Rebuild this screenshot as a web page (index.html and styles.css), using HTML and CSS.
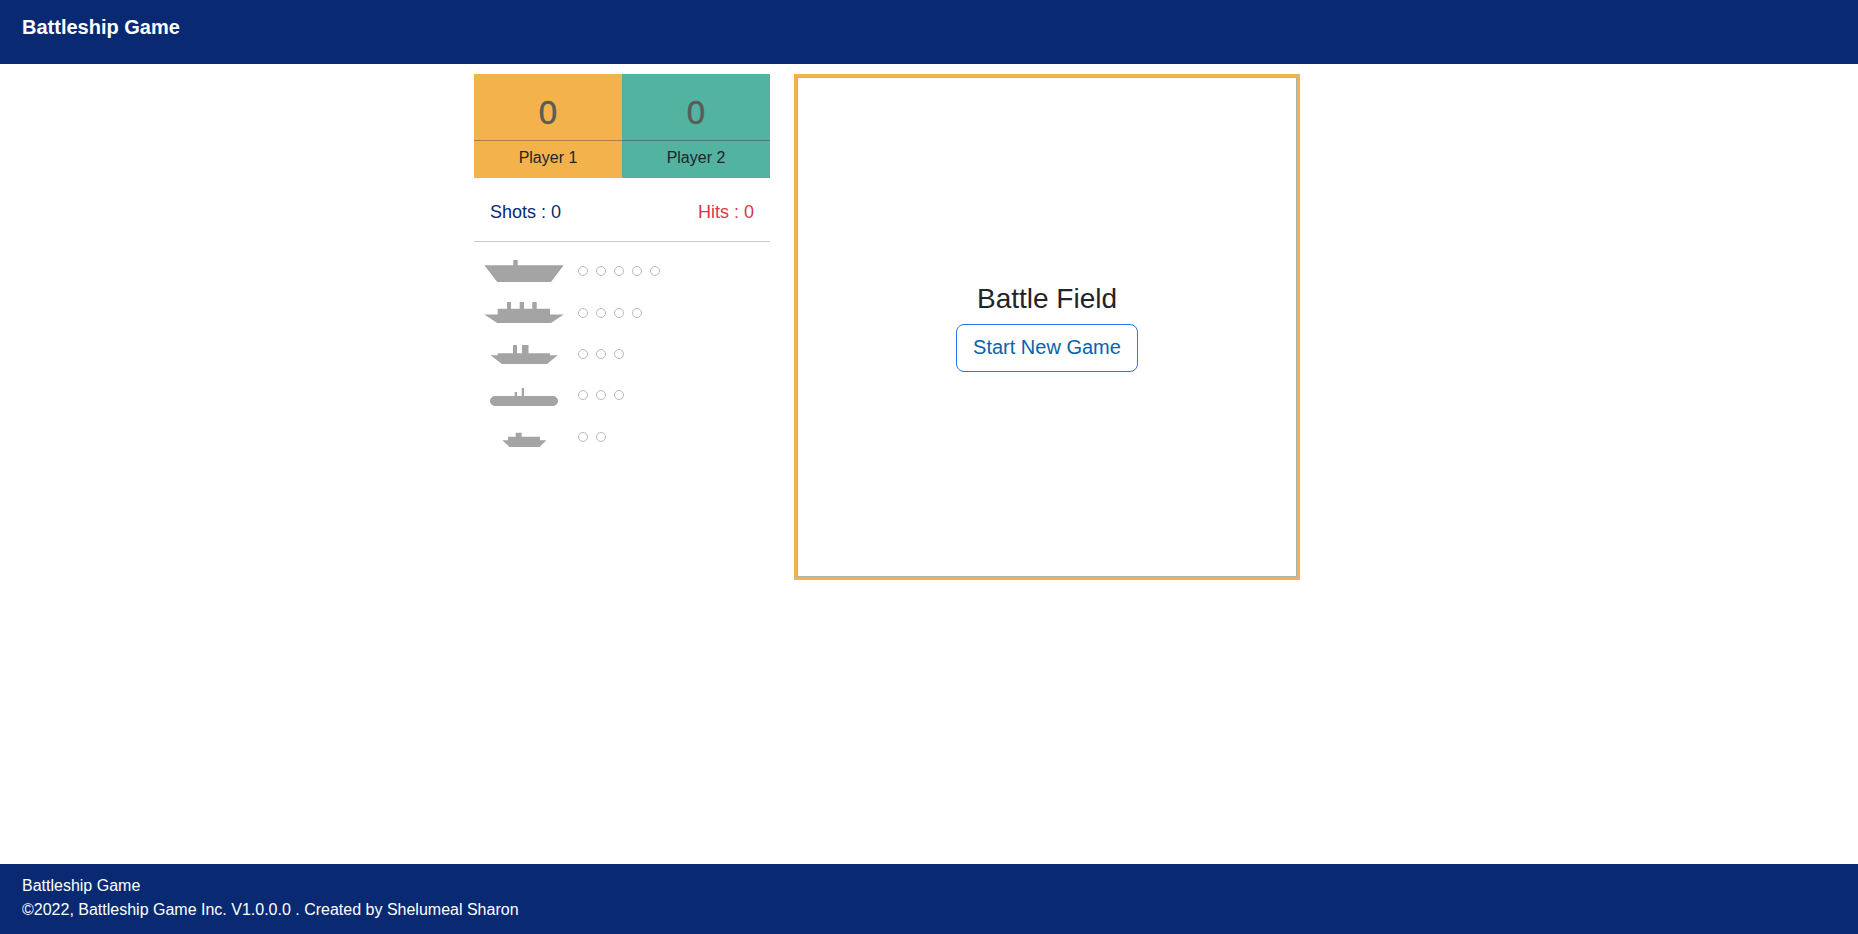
FILE: index.html
```html
<!DOCTYPE html>
<html lang="en">
<head>
<meta charset="utf-8">
<title>Battleship Game</title>
<link rel="stylesheet" href="styles.css">
</head>
<body>
<header class="header"><span class="brand">Battleship Game</span></header>
<main class="main">
  <section class="panel">
    <div class="players">
      <div class="player player-one"><div class="score">0</div><div class="name">Player 1</div></div>
      <div class="player player-two"><div class="score">0</div><div class="name">Player 2</div></div>
    </div>
    <div class="stats"><span class="shots">Shots : 0</span><span class="hits">Hits : 0</span></div>
    <div class="ships">
      <div class="ship">
        <svg class="hull" viewBox="0 0 80 42"><path d="M.3 15.3H29.3V10H33.7V15.3H79.7L67 32H13.3Z"/></svg>
        <i class="dot"></i><i class="dot"></i><i class="dot"></i><i class="dot"></i><i class="dot"></i>
      </div>
      <div class="ship">
        <svg class="hull" viewBox="0 0 80 42"><path d="M.3 22.4H13.7V16.7H23V10H27V16.7H35.7V10H40V16.7H48.3V10H52.7V16.7H66V22.4H79.7L67 31H13.3Z"/></svg>
        <i class="dot"></i><i class="dot"></i><i class="dot"></i><i class="dot"></i>
      </div>
      <div class="ship ship-short">
        <svg class="hull" viewBox="0 1 80 40"><path d="M6.5 22.3H13.7V20.3H29V12H33V20.3H38V12H44.5V20.3H66V22.3H73.7L63 31H18Z"/></svg>
        <i class="dot"></i><i class="dot"></i><i class="dot"></i>
      </div>
      <div class="ship">
        <svg class="hull" viewBox="0 0 80 42"><path d="M11 22H30.7V18H33V22H37.8V14H40V22H69A5 5 0 0 1 69 32H11A5 5 0 0 1 11 22Z"/></svg>
        <i class="dot"></i><i class="dot"></i><i class="dot"></i>
      </div>
      <div class="ship">
        <svg class="hull" viewBox="0 0 80 42"><path d="M18.3 24.3H24V20.7H31.7V16.7H37.7V20.7H56V24.3H62.5L55.5 31H25.5Z"/></svg>
        <i class="dot"></i><i class="dot"></i>
      </div>
    </div>
  </section>
  <section class="board">
    <h1 class="board-title">Battle Field</h1>
    <button class="start">Start New Game</button>
  </section>
</main>
<footer class="footer">
  <div class="foot-brand">Battleship Game</div>
  <div class="foot-copy">©2022, Battleship Game Inc. V1.0.0.0 . Created by Shelumeal Sharon</div>
</footer>
</body>
</html>
```
FILE: styles.css
```css
* { box-sizing: border-box; }
body {
  margin: 0;
  min-height: 934px;
  display: flex;
  flex-direction: column;
  background: #fff;
  color: #212529;
  font-family: Helvetica, "Liberation Sans", Arial, sans-serif;
}
.header { height: 64px; padding: 12px 22px; background: #092a73; color: #fff; }
.brand { font-size: 20px; font-weight: 700; line-height: 30px; display: block; }
.main { flex: 1; display: flex; align-items: flex-start; padding: 10px 0 0 474px; gap: 24px; }
.panel { width: 296px; }
.players { display: flex; }
.player { width: 148px; height: 104px; text-align: center; }
.player-one { background: #f4b24c; }
.player-two { background: #52b3a0; }
.score { height: 67px; padding-top: 19px; border-bottom: 1px solid rgba(33, 37, 41, .35); font-size: 33px; line-height: 40px; color: #5a5a5a; -webkit-text-stroke: .5px #5a5a5a; }
.name { font-size: 16px; line-height: 33px; }
.stats { height: 64px; padding: 6px 16px 0; display: flex; align-items: center; justify-content: space-between; border-bottom: 1px solid #c8c9ca; font-size: 18px; }
.shots { color: #092a73; }
.hits { color: #dc3545; }
.ships { padding: 8px 0 0 10px; }
.ship { height: 42px; display: flex; align-items: center; gap: 8px; }
.ship-short { height: 40px; }
.hull { width: 80px; height: 100%; margin-right: 6px; fill: #a4a4a4; flex: none; }
.dot { width: 10px; height: 10px; border: 1px solid #b9b9b9; border-radius: 50%; }
.board {
  width: 506px;
  height: 506px;
  border: 3px solid #f4b24c;
  box-shadow: inset 0 0 0 1px #b0b0b0;
  display: flex;
  flex-direction: column;
  align-items: center;
  justify-content: center;
}
.board-title { margin: 0 0 8px; font-size: 28px; font-weight: 400; line-height: 34px; }
.start {
  width: 182px;
  height: 48px;
  padding: 0 0 2px;
  border: 1px solid #2a72f0;
  border-radius: 8px;
  background: #fff;
  color: #0563ad;
  font: 20px/30px Helvetica, "Liberation Sans", Arial, sans-serif;
}
.footer { height: 70px; padding: 10px 22px; background: #092a73; color: #fff; font-size: 16px; line-height: 24px; }
```
